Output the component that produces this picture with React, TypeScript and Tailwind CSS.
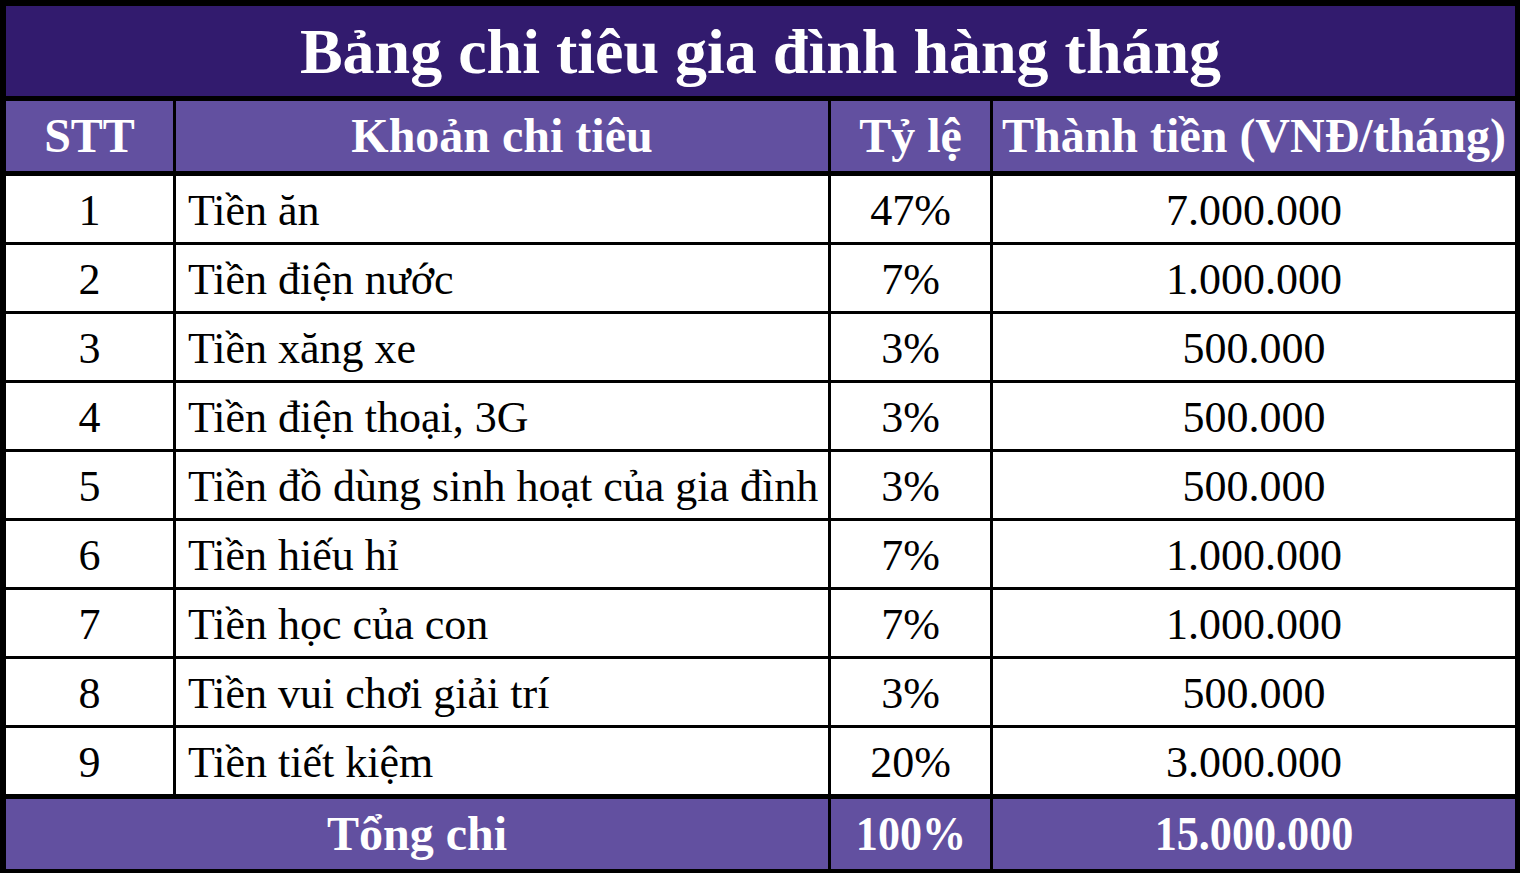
import React from "react";

const rows: [string, string, string, string][] = [
  ["1", "Tiền ăn", "47%", "7.000.000"],
  ["2", "Tiền điện nước", "7%", "1.000.000"],
  ["3", "Tiền xăng xe", "3%", "500.000"],
  ["4", "Tiền điện thoại, 3G", "3%", "500.000"],
  ["5", "Tiền đồ dùng sinh hoạt của gia đình", "3%", "500.000"],
  ["6", "Tiền hiếu hỉ", "7%", "1.000.000"],
  ["7", "Tiền học của con", "7%", "1.000.000"],
  ["8", "Tiền vui chơi giải trí", "3%", "500.000"],
  ["9", "Tiền tiết kiệm", "20%", "3.000.000"],
];

const cols = "grid grid-cols-[167px_652px_159px_522px] gap-x-[3px]";

export default function App() {
  return (
    <div className="w-[1526px] h-[878px] bg-white" style={{ fontFamily: '"Liberation Serif", "Times New Roman", serif' }}>
      <div className="w-[1520px] bg-black pt-[6px] pl-[6px] pr-[5px] pb-[4px] flex flex-col">
        <div className="h-[90px] bg-[#321b6e] flex items-center justify-center text-white font-bold text-[64px] leading-none">
          <span className="inline-block pt-[2px]">Bảng chi tiêu gia đình hàng tháng</span>
        </div>
        <div className={`${cols} mt-[5px] h-[70px]`}>
          {["STT", "Khoản chi tiêu", "Tỷ lệ", "Thành tiền (VNĐ/tháng)"].map((h) => (
            <div key={h} className="bg-[#6250a0] flex items-center justify-center text-white font-bold text-[48px] leading-none whitespace-nowrap overflow-hidden">
              <span className="inline-block">{h}</span>
            </div>
          ))}
        </div>
        <div className="mt-[5px] flex flex-col gap-y-[3px]">
          {rows.map((r) => (
            <div key={r[0]} className={`${cols} h-[66px]`}>
              <div className="bg-white flex items-center justify-center text-black text-[44px] leading-none pt-[4px]">{r[0]}</div>
              <div className="bg-white flex items-center pl-[12px] text-black text-[44px] leading-none whitespace-nowrap overflow-hidden pt-[4px]">{r[1]}</div>
              <div className="bg-white flex items-center justify-center text-black text-[44px] leading-none pt-[4px]">{r[2]}</div>
              <div className="bg-white flex items-center justify-center text-black text-[44px] leading-none pt-[4px]">{r[3]}</div>
            </div>
          ))}
        </div>
        <div className="grid grid-cols-[822px_159px_522px] gap-x-[3px] mt-[5px] h-[70px]">
          <div className="bg-[#6250a0] flex items-center justify-center text-white font-bold text-[48px] leading-none">
            <span className="inline-block">Tổng chi</span>
          </div>
          <div className="bg-[#6250a0] flex items-center justify-center text-white font-bold text-[48px] leading-none">
            <span className="inline-block scale-x-[0.92]">100%</span>
          </div>
          <div className="bg-[#6250a0] flex items-center justify-center text-white font-bold text-[48px] leading-none">
            <span className="inline-block scale-x-[0.92]">15.000.000</span>
          </div>
        </div>
      </div>
    </div>
  );
}
